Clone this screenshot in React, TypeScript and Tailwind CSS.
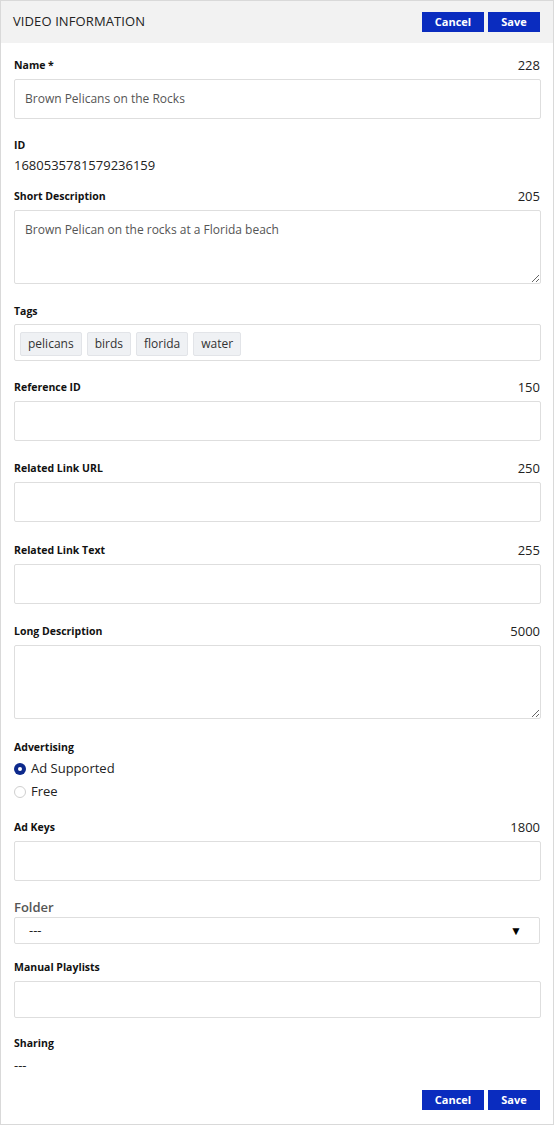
import React from "react";

const font = { fontFamily: '"Open Sans", "Noto Sans", sans-serif' };

function Btn({ children, w }: { children: React.ReactNode; w: string }) {
  return (
    <button
      className={`h-[20px] ${w} bg-[#0a2cbf] text-white text-[11px] font-bold leading-[20px] flex items-center justify-center`}
    >
      {children}
    </button>
  );
}

function Label({ text, count }: { text: string; count?: string }) {
  return (
    <div className="flex justify-between items-center h-[15px] leading-[15px] text-[#111]">
      <span className="font-bold text-[10.5px]">{text}</span>
      {count && <span className="text-[13px] text-[#222] mr-[1px]">{count}</span>}
    </div>
  );
}

function Input({ value, h = "h-[40px]" }: { value?: string; h?: string }) {
  return (
    <div
      className={`${h} mt-[6px] border border-[#dedede] rounded-[2px] bg-white flex items-center pl-[10px] text-[12px] text-[#555]`}
    >
      {value}
    </div>
  );
}

function TextArea({ value }: { value?: string }) {
  return (
    <textarea
      defaultValue={value}
      className="block w-full h-[74px] mt-[6px] border border-[#dedede] rounded-[2px] bg-white px-[10px] py-[10px] text-[12px] leading-[18px] text-[#555] resize-y outline-none"
      style={font}
    />
  );
}

export default function App() {
  return (
    <div className="w-[554px] h-[1125px] bg-white border border-[#d9d9d9] flex flex-col" style={font}>
      <div className="h-[42px] bg-[#f2f2f2] flex items-center justify-between pl-[12px] pr-[13px] shrink-0">
        <span className="text-[13px] text-[#222] tracking-[0.1px]">VIDEO INFORMATION</span>
        <div className="flex gap-[4px]">
          <Btn w="w-[62px]">Cancel</Btn>
          <Btn w="w-[52px]">Save</Btn>
        </div>
      </div>

      <div className="pl-[13px] pr-[12px] pt-[15px] flex flex-col">
        <Label text="Name *" count="228" />
        <Input value="Brown Pelicans on the Rocks" />

        <div className="mt-[19px]">
          <div className="text-[10.5px] leading-[15px] font-bold text-[#111]">ID</div>
          <div className="text-[13px] leading-[18px] text-[#222] mt-[3px]">1680535781579236159</div>
        </div>

        <div className="mt-[15px]">
          <Label text="Short Description" count="205" />
          <TextArea value="Brown Pelican on the rocks at a Florida beach" />
        </div>

        <div className="mt-[20px]">
          <Label text="Tags" />
          <div className="mt-[5px] h-[37px] border border-[#dedede] rounded-[2px] flex items-start gap-[5px] pl-[5px] pt-[7px]">
            {["pelicans", "birds", "florida", "water"].map((t) => (
              <span
                key={t}
                className="h-[24px] px-[7px] bg-[#eff1f4] border border-[#e2e4e8] rounded-[2px] text-[12px] text-[#333] flex items-center"
              >
                {t}
              </span>
            ))}
          </div>
        </div>

        <div className="mt-[19px]">
          <Label text="Reference ID" count="150" />
          <Input />
        </div>

        <div className="mt-[20px]">
          <Label text="Related Link URL" count="250" />
          <Input />
        </div>

        <div className="mt-[21px]">
          <Label text="Related Link Text" count="255" />
          <Input />
        </div>

        <div className="mt-[20px]">
          <Label text="Long Description" count="5000" />
          <TextArea />
        </div>

        <div className="mt-[21px]">
          <Label text="Advertising" />
          <div className="mt-[3px] flex items-center h-[22px] text-[13px] text-[#222]">
            <span className="w-[12px] h-[12px] rounded-full bg-[#0d2a8c] flex items-center justify-center mr-[5px]">
              <span className="w-[4px] h-[4px] rounded-full bg-white" />
            </span>
            Ad Supported
          </div>
          <div className="flex items-center h-[23px] text-[13px] text-[#222]">
            <span className="w-[12px] h-[12px] rounded-full border border-[#cfcfcf] bg-white mr-[5px]" />
            Free
          </div>
        </div>

        <div className="mt-[17px]">
          <Label text="Ad Keys" count="1800" />
          <Input />
        </div>

        <div className="mt-[17px]">
          <div className="text-[13px] leading-[18px] font-semibold text-[#555]">Folder</div>
          <div className="mt-[1px] mr-[1px] h-[27px] border border-[#dedede] rounded-[2px] flex items-center justify-between pl-[14px] pr-[17px] text-[13px] text-[#222]">
            <span>---</span>
            <span className="text-[12px] text-black">▼</span>
          </div>
        </div>

        <div className="mt-[16px]">
          <Label text="Manual Playlists" />
          <Input h="h-[37px]" />
        </div>

        <div className="mt-[18px]">
          <div className="text-[10.5px] leading-[15px] font-bold text-[#111]">Sharing</div>
          <div className="text-[13px] leading-[18px] text-[#222] mt-[5px]">---</div>
        </div>

        <div className="mt-[16px] mr-[1px] flex justify-end gap-[4px]">
          <Btn w="w-[62px]">Cancel</Btn>
          <Btn w="w-[52px]">Save</Btn>
        </div>
      </div>
    </div>
  );
}
